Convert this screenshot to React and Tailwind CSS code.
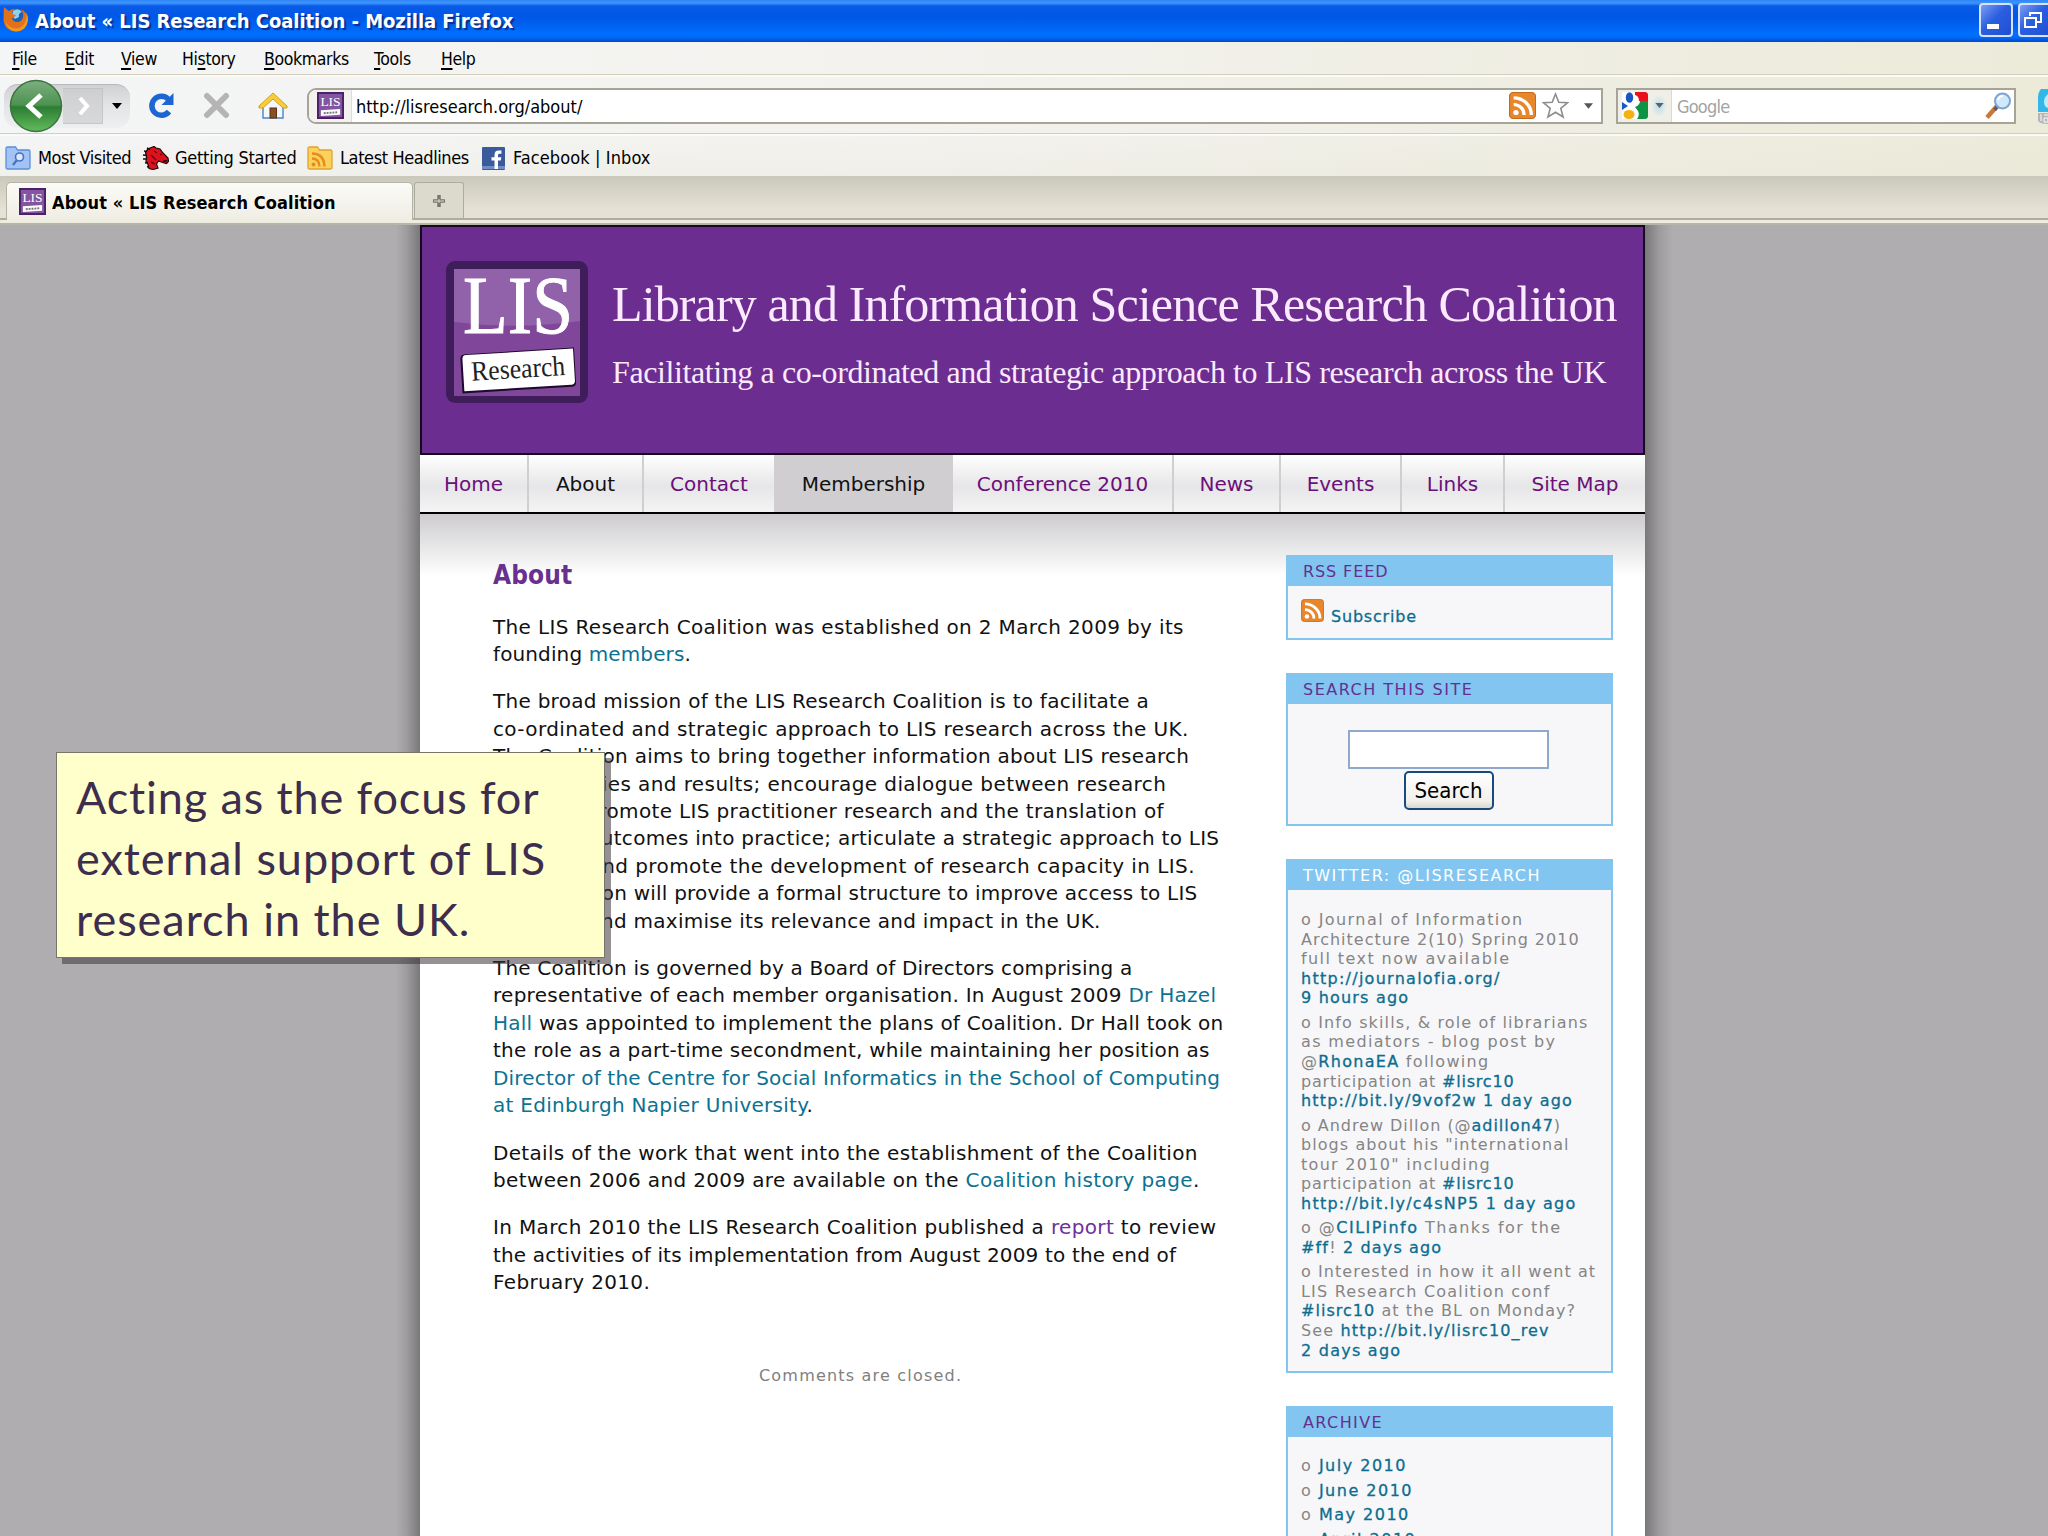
import React from 'react';

const menuItems = [
    { key: 'F', before: '', after: 'ile', width: 'w-[53px]' },
    { key: 'E', before: '', after: 'dit', width: 'w-[56px]' },
    { key: 'V', before: '', after: 'iew', width: 'w-[61px]' },
    { key: 's', before: 'Hi', after: 'tory', width: 'w-[82px]' },
    { key: 'B', before: '', after: 'ookmarks', width: 'w-[110px]' },
    { key: 'T', before: '', after: 'ools', width: 'w-[67px]' },
    { key: 'H', before: '', after: 'elp', width: 'w-[60px]' },
];

const navItems = [
    { label: 'Home', width: 'w-[109px]' },
    { label: 'About', width: 'w-[115px]', current: true },
    { label: 'Contact', width: 'w-[132px]' },
    { label: 'Membership', width: 'w-[177px]', hover: true },
    { label: 'Conference 2010', width: 'w-[221px]' },
    { label: 'News', width: 'w-[107px]' },
    { label: 'Events', width: 'w-[121px]' },
    { label: 'Links', width: 'w-[103px]' },
    { label: 'Site Map', width: 'w-[140px]' },
];

const months = ['July 2010', 'June 2010', 'May 2010', 'April 2010'];

const LisLogo = ({ className }) => (
    <svg viewBox="0 0 142 142" className={className}>
        <rect x="0" y="0" width="142" height="142" rx="9" fill="#3f1d5b" />
        <rect x="8" y="8" width="126" height="127" fill="#7f4699" />
        <path d="M8 8h126v52q-62 9-126 1z" fill="#9161a9" />
        <text x="17" y="72" fontSize="82" fill="#fff" stroke="#fff" strokeWidth="1" textLength="110" lengthAdjust="spacingAndGlyphs" className="font-['Liberation_Serif',serif]">LIS</text>
        <g transform="rotate(-3.5 71 106)">
            <path d="M20 90h109v35q0 4-4 4h-110v-34q0-5 5-5z" fill="#1d0a2c" />
            <path d="M21 91h107v32q0 4-4 4h-107v-32q0-4 4-4z" fill="#fff" />
            <text x="25" y="117" fontSize="28" fill="#222" textLength="94" lengthAdjust="spacingAndGlyphs" className="font-['Liberation_Serif',serif]">Research</text>
        </g>
    </svg>
);

const Favicon = ({ className }) => (
    <svg viewBox="0 0 28 28" preserveAspectRatio="none" className={className}>
        <rect width="28" height="28" fill="#4a2169" />
        <rect x="2" y="2" width="24" height="24" fill="#8454a0" />
        <text x="3.5" y="14.5" fontSize="14" fill="#fff" textLength="21" lengthAdjust="spacingAndGlyphs" className="font-['Liberation_Serif',serif]">LIS</text>
        <path d="M4 19l20-1.500v6l-20 1.500z" fill="#fff" />
        <path d="M7 22l14-1" stroke="#777" strokeWidth="2" strokeDasharray="2 1" />
    </svg>
);

const RssIcon = ({ className }) => (
    <svg viewBox="0 0 26 27" preserveAspectRatio="none" className={className}>
        <rect x="0.500" y="0.500" width="25" height="26" rx="3.500" fill="#e8862c" stroke="#c8691a" />
        <circle cx="6.700" cy="20.500" r="2.600" fill="#fff" />
        <path d="M4.500 12.500a10 10 0 0 1 10 10.500M4.500 5.800a17 17 0 0 1 17 17.200" fill="none" stroke="#fff" strokeWidth="3.200" />
    </svg>
);

const FirefoxIcon = () => (
    <svg viewBox="0 0 26 27" className="w-[26px] h-[27px]">
        <circle cx="13" cy="13.500" r="10.500" fill="#1c5fb4" />
        <path d="M10 6q5-4 9 1q-4 1-3 5l-4 2-3-3z" fill="#8fd0ee" />
        <path d="M1 2q3 3 5 4q2-2 6-2q-4 3-3 5l4 1q-1 2-4 3q1 4 5 4q5 0 6-5q1-4-2-8q7 4 7 11q-1 11-12 11.500q-12-1-12.500-12q0-7 .500-12.500z" fill="#e2711a" />
        <path d="M2 15q3 8 11 8.500q8-1 9.500-8q2-5 0-9q3 4 2.500 9q-2 10.500-12 11q-9-.500-11-11.500z" fill="#f5a822" opacity="0.7" />
    </svg>
);

const ReloadIcon = () => (
    <svg viewBox="0 0 27 27" className="w-[27px] h-[27px]">
        <path d="M21 19.500a9.500 9.500 0 1 1-.500-12" fill="none" stroke="#1d66d2" strokeWidth="5.500" />
        <path d="M25.500 1v12h-12z" fill="#1d66d2" />
    </svg>
);

const HomeIcon = () => (
    <svg viewBox="0 0 30 27" className="w-[30px] h-[27px]">
        <path d="M5 13v13h20V13L15 5z" fill="#f3f8ff" stroke="#4c83c4" strokeWidth="1.400" />
        <rect x="12" y="16" width="6.500" height="10" fill="#8a4e24" stroke="#5d3113" />
        <path d="M15 1L1 14v2h4l10-9 10 9h4v-2z" fill="#f7cd3e" stroke="#d4a017" />
    </svg>
);

const FolderIcon = ({ tone, children }) => (
    <svg viewBox="0 0 26 24" className="w-[26px] h-6">
        <path d="M1 2.500q0-1.500 1.500-1.500h8l2 3h11q1.500 0 1.500 1.500v16q0 1.500-1.500 1.500h-21q-1.500 0-1.500-1.500z"
            fill={tone === 'blue' ? '#a3c3f5' : '#fbd25c'} stroke={tone === 'blue' ? '#5c8ddd' : '#e0a32c'} strokeWidth="1.300" />
        {children}
    </svg>
);

const HorseIcon = () => (
    <svg viewBox="0 0 27 24" className="w-[27px] h-6">
        <path d="M8 2l4-1.500 2 1.500 4 1 3 4 5 5 .500 3.500-2 2-4-1-4-1.500-2 3 1.500 4-5 1.500-4-1-1-4-2-3 .500-5-1-4 2-3z" fill="#dc121c" stroke="#2a0506" strokeWidth="1.200" />
        <path d="M2 5l3 .500M1 9l4 .500M1 13h4M3 17l3-.500M5 21l2-.500M5 2l3 1.500" stroke="#111" strokeWidth="1.600" />
        <path d="M12 5l3 2M9 9l5 5M9 16l4 2M18 8.500h2" stroke="#6d060b" strokeWidth="1.400" />
        <path d="M21 15.500l4-1" stroke="#111" strokeWidth="1.800" />
    </svg>
);

const FacebookIcon = () => (
    <svg viewBox="0 0 23 23" className="w-[23px] h-[23px]">
        <rect width="23" height="23" rx="1" fill="#3b5a9c" />
        <rect y="19" width="23" height="3" fill="#6f8cc4" />
        <path d="M12.500 22v-8.500h-3v-3.300h3v-2.400q0-4.300 4.300-4.300h2.600v3.300h-2q-1.400 0-1.400 1.400v2h3.300l-.500 3.300h-2.800v8.500z" fill="#fff" />
    </svg>
);

const GoogleIcon = () => (
    <svg viewBox="0 0 26 27" className="w-[26px] h-[27px]">
        <rect width="26" height="27" fill="#fff" />
        <path d="M13 0h10q3 0 3 3v6H17q0-5-4-6z" fill="#e8111b" />
        <path d="M26 9v15q0 3-3 3h-8q3-4 1-8l-3-4q5-2 5-6z" fill="#0c9344" />
        <ellipse cx="7.500" cy="5.500" rx="3.700" ry="5.300" fill="#1a56c4" />
        <path d="M0 10l6 4-6 4z" fill="#1a56c4" />
        <ellipse cx="7" cy="22.500" rx="5.500" ry="4.500" fill="#f2b211" />
    </svg>
);

const SearchGlass = () => (
    <svg viewBox="0 0 27 27" className="w-[27px] h-[27px]">
        <path d="M12 14L2 25.500" stroke="#c9783a" strokeWidth="4.500" />
        <path d="M13 14L9.500 18" stroke="#5a5f77" strokeWidth="3.500" />
        <circle cx="17.500" cy="9" r="7.500" fill="#cfe8fc" stroke="#7fa3d3" strokeWidth="2" />
        <path d="M13 8q1-4 5-4" stroke="#fff" strokeWidth="2" fill="none" />
    </svg>
);

const Caret = ({ className }) => (
    <svg viewBox="0 0 10 6" className={className}><path d="M0 0h10L5 6z" fill="currentColor" /></svg>
);

const BrowserChrome = () => (
    <header className="shrink-0 text-black font-['DejaVu_Sans_Condensed','DejaVu_Sans',sans-serif]">
        {/* Title bar */}
        <div className="h-[42px] flex items-center pl-[3px] overflow-hidden bg-[linear-gradient(to_bottom,#2f86f5_0,#3d95ff_3px,#0a5be6_6px,#0057e6_16px,#0062f2_26px,#0070ff_34px,#006cfa_37px,#0048cf_42px)]">
            <div className="-mt-[6px]"><FirefoxIcon /></div>
            <div className="flex-1 ml-[6px] text-[20px] leading-[42px] font-bold text-white whitespace-nowrap tracking-[-0.05px] [text-shadow:2px_2px_1px_#0a2f8c]">
                About « LIS Research Coalition - Mozilla Firefox
            </div>
            <div className="flex gap-[5px] -mr-[4px] shrink-0 -mt-[2px]">
                <div className="w-[34px] h-[34px] rounded-[4px] border-2 border-[#d6e2ff] bg-[linear-gradient(135deg,#7d9df2,#2b5fe0_45%,#1f4fd0)] flex items-end pl-[6px] pb-[6px]">
                    <div className="w-3 h-[5px] bg-white" />
                </div>
                <div className="w-[34px] h-[34px] rounded-[4px] border-2 border-[#d6e2ff] bg-[linear-gradient(135deg,#7d9df2,#2b5fe0_45%,#1f4fd0)] flex items-center justify-center">
                    <svg viewBox="0 0 18 18" className="w-[18px] h-[18px] -ml-[4px]">
                        <path d="M6 5V2h11v9h-4" fill="none" stroke="#fff" strokeWidth="2" />
                        <rect x="1" y="7" width="11" height="9" fill="none" stroke="#fff" strokeWidth="2" />
                    </svg>
                </div>
            </div>
        </div>

        <div className="bg-[linear-gradient(to_right,#f4f5f6,#f3f2ee_45%,#ecead9)]">
            {/* Menu */}
            <div className="h-[35px] pl-3 flex border-b-2 border-[#fbfaf4] shadow-[inset_0_-1px_0_#d2cfbc] text-[17.5px] leading-[34px] tracking-[-0.35px]">
                {menuItems.map((item) => (
                    <div key={item.key} className={item.width}>
                        {item.before}<span className="underline underline-offset-[3px] decoration-[1.5px]">{item.key}</span>{item.after}
                    </div>
                ))}
            </div>

            {/* Navigation toolbar */}
            <div className="h-[59px] flex items-center border-b-2 border-[#fbfaf4] shadow-[inset_0_-1px_0_#d2cfbc]">
                <div className="ml-1 w-[126px] h-[44px] rounded-[14px] border-t border-[#b9b9bb] bg-[linear-gradient(to_bottom,#d0d1d3,#e4e5e7_50%,#eeeff0)] flex items-center">
                    <svg viewBox="0 0 54 54" className="w-[54px] h-[54px] ml-[5px] shrink-0">
                        <defs>
                            <linearGradient id="back" x1="0" y1="0" x2="0" y2="1">
                                <stop offset="0" stopColor="#7dae7f" />
                                <stop offset="0.48" stopColor="#4b9350" />
                                <stop offset="0.52" stopColor="#2c7d31" />
                                <stop offset="1" stopColor="#63bb5d" />
                            </linearGradient>
                        </defs>
                        <circle cx="27" cy="27" r="25.500" fill="url(#back)" stroke="#3d7440" strokeWidth="1.500" />
                        <path d="M32 16L20 27l12 11" fill="none" stroke="#fff" strokeWidth="5" />
                    </svg>
                    <div className="w-[40px] h-[36px] bg-[#c9cacc]/60 border border-[#bcbdbf]/60 border-l-0 flex items-center justify-center">
                        <svg viewBox="0 0 12 18" className="w-3 h-[18px] ml-[3px]"><path d="M2 1l7 8-7 8" fill="none" stroke="#fff" strokeWidth="4" /></svg>
                    </div>
                    <Caret className="w-[10px] h-[6px] ml-[9px]" />
                </div>
                <div className="ml-[18px]"><ReloadIcon /></div>
                <svg viewBox="0 0 27 27" className="w-[27px] h-[27px] ml-[28px]">
                    <path d="M4 4l19 19M23 4L4 23" stroke="#b4b4b4" strokeWidth="6" strokeLinecap="round" />
                </svg>
                <div className="ml-[28px]"><HomeIcon /></div>

                <div className="ml-[19px] w-[1296px] h-9 border-2 border-[#a5a497] rounded-l-[9px] bg-white flex items-center overflow-hidden">
                    <div className="w-[43px] h-full bg-[#f3f2ee] border-r border-[#dddcd5] flex items-center pl-2">
                        <Favicon className="w-[27px] h-[27px]" />
                    </div>
                    <span className="flex-1 pl-[4px] pt-[2px] text-[18px] tracking-[0px]">http://lisresearch.org/about/</span>
                    <RssIcon className="w-[27px] h-[27px]" />
                    <svg viewBox="0 0 27 27" className="w-[27px] h-[27px] ml-[6px]">
                        <path d="M13.500 2l3.300 8.200 8.700.600-6.700 5.600 2.300 8.600-7.600-4.800-7.600 4.800 2.300-8.600-6.700-5.600 8.700-.600z" fill="#fff" stroke="#8d8d8d" strokeWidth="1.600" />
                    </svg>
                    <Caret className="w-[9px] h-[6px] ml-[15px] mr-[8px] text-[#555]" />
                </div>

                <div className="ml-[13px] w-[400px] h-9 border-2 border-[#a5a497] bg-white flex items-center">
                    <div className="w-[54px] h-full bg-[#efefe8] border-r border-[#dcdad0] flex items-center pl-1 gap-[3px]">
                        <GoogleIcon />
                        <div className="w-[16px] h-[22px] rounded-full bg-[radial-gradient(#bcdcea,transparent_70%)] flex items-center justify-center">
                            <Caret className="w-[9px] h-[5px] text-[#55636b]" />
                        </div>
                    </div>
                    <span className="flex-1 pl-[5px] pt-[2px] text-[18px] tracking-[-0.8px] text-[#a3a3a3]">Google</span>
                    <div className="mr-[2px]"><SearchGlass /></div>
                </div>
                <svg viewBox="0 0 12 40" className="w-3 h-10 ml-[20px] shrink-0">
                    <path d="M12 3H5q-3 3-3 9v14h10z" fill="#31b8e8" />
                    <path d="M12 8q-4 3-4 8t4 6z" fill="#bfeafa" />
                    <path d="M12 27H2v8q2 3 10 3z" fill="#b5b5ba" />
                    <path d="M5 28v7M8 29h4M8 32h4v4H8z" stroke="#fff" fill="none" />
                </svg>
            </div>

            {/* Bookmarks */}
            <div className="h-10 flex items-center pl-[5px] pt-1 text-[18px] leading-[36px] whitespace-nowrap bg-[linear-gradient(to_bottom,transparent,#e6e4d540)]">
                <FolderIcon tone="blue">
                    <circle cx="14.500" cy="11" r="4" fill="#dbe8fd" stroke="#4672c4" strokeWidth="1.600" />
                    <path d="M11.500 14.500L8 19" stroke="#4672c4" strokeWidth="2.200" />
                </FolderIcon>
                <span className="ml-[7px] w-[104px] tracking-[-0.45px]">Most Visited</span>
                <HorseIcon />
                <span className="ml-[6px] w-[132px] tracking-[-0.25px]">Getting Started</span>
                <FolderIcon tone="yellow">
                    <circle cx="6.500" cy="18.500" r="2" fill="#e98a1d" />
                    <path d="M5 12.500q7 0 7.500 8M5 7.500q12 0 12.500 13" fill="none" stroke="#e98a1d" strokeWidth="2.400" />
                </FolderIcon>
                <span className="ml-[7px] w-[142px] tracking-[-0.4px]">Latest Headlines</span>
                <FacebookIcon />
                <span className="ml-2 tracking-[0.1px]">Facebook | Inbox</span>
            </div>
        </div>

        {/* Tabs */}
        <div className="h-[44px] flex items-end pl-[6px] bg-[linear-gradient(to_bottom,#c9c8bb,#d6d4c6_35%,#e5e2d5_80%)] border-b-2 border-[#aeac9e]">
            <div className="w-[407px] h-[38px] -mb-[2px] rounded-t-[5px] border border-b-0 border-[#b5b3a5] bg-[linear-gradient(to_bottom,#fbfbf7,#efede3)] flex items-center pl-[12px]">
                <Favicon className="w-[27px] h-[27px]" />
                <span className="ml-[6px] pt-px text-[18px] font-bold tracking-[0.1px] whitespace-nowrap">About « LIS Research Coalition</span>
            </div>
            <div className="w-[50px] h-[36px] ml-px rounded-t-[3px] border border-b-0 border-[#aeac9e] bg-[#dcdacd] flex items-center justify-center">
                <svg viewBox="0 0 14 14" className="w-[14px] h-[14px]">
                    <path d="M7 1v12M1 7h12" stroke="#77776f" strokeWidth="3.500" />
                    <path d="M7 5v4M2 7h10" stroke="#dddbd0" strokeWidth="1" />
                </svg>
            </div>
        </div>
        <div className="h-[5px] bg-[#eeebdf] border-b-2 border-[#b7b4aa]" />
    </header>
);

const A = ({ children }) => <a className="text-[#0b7291]">{children}</a>;
const T = ({ children }) => <a className="text-[#0b6d90] [-webkit-text-stroke:0.3px_#0b6d90]">{children}</a>;

const Line = ({ className = 'tracking-[0.35px]', children }) => (
    <span className={`block whitespace-nowrap ${className}`}>{children}</span>
);

const Box = ({ title, titleClass = 'text-[#64308f]', className, children }) => (
    <section className={`border-2 border-[#82c5ef] bg-[#f7f7f9] ${className}`}>
        <h3 className={`h-[29px] leading-[29px] pl-[15px] text-[16px] bg-[#82c5f0] whitespace-nowrap ${titleClass}`}>{title}</h3>
        {children}
    </section>
);

const Sidebar = () => (
    <aside className="w-[327px] pt-[41px] text-[16px] shrink-0">
        <Box title="RSS FEED" titleClass="text-[#64308f] tracking-[0.9px]" className="h-[85px]">
            <div className="flex pl-[13px] pt-[13px]">
                <RssIcon className="w-[23px] h-[23px]" />
                <span className="ml-[7px] mt-[6px] leading-6 tracking-[0.8px]"><T>Subscribe</T></span>
            </div>
        </Box>

        <Box title="SEARCH THIS SITE" titleClass="text-[#64308f] tracking-[1.5px]" className="h-[153px] mt-[33px]">
            <div className="flex flex-col items-center pt-[26px] pr-[2px]">
                <div className="w-[201px] h-[39px] bg-white border-2 border-[#8fa9cd]" />
                <div className="mt-[2px] w-[90px] h-[39px] rounded-[5px] border-2 border-[#164a80] bg-[linear-gradient(to_bottom,#fff,#f1f0ea_80%,#dbd7cc)] text-black text-[22px] leading-[36px] text-center font-['DejaVu_Sans_Condensed',sans-serif]">Search</div>
            </div>
        </Box>

        <Box title="TWITTER: @LISRESEARCH" titleClass="text-white tracking-[1.5px]" className="h-[514px] mt-[33px]">
            <ul className="pl-[13px] pt-[20px] leading-[19.6px] text-[#858585] space-y-[4.8px]">
                <li>
                    <Line className="tracking-[1.42px]">o Journal of Information</Line>
                    <Line className="tracking-[1px]">Architecture 2(10) Spring 2010</Line>
                    <Line className="tracking-[1.42px]">full text now available</Line>
                    <Line className="tracking-[1.27px]"><T>http://journalofia.org/</T></Line>
                    <Line className="tracking-[1.2px]"><T>9 hours ago</T></Line>
                </li>
                <li>
                    <Line className="tracking-[1.13px]">o Info skills, &amp; role of librarians</Line>
                    <Line className="tracking-[1.35px]">as mediators - blog post by</Line>
                    <Line className="tracking-[1.3px]">@<T>RhonaEA</T> following</Line>
                    <Line className="tracking-[0.8px]">participation at <T>#lisrc10</T></Line>
                    <Line className="tracking-[1.16px]"><T>http://bit.ly/9vof2w</T> <T>1 day ago</T></Line>
                </li>
                <li>
                    <Line className="tracking-[0.96px]">o Andrew Dillon (@<T>adillon47</T>)</Line>
                    <Line className="tracking-[1.07px]">blogs about his "international</Line>
                    <Line className="tracking-[1.3px]">tour 2010" including</Line>
                    <Line className="tracking-[0.8px]">participation at <T>#lisrc10</T></Line>
                    <Line className="tracking-[1.25px]"><T>http://bit.ly/c4sNP5</T> <T>1 day ago</T></Line>
                </li>
                <li>
                    <Line className="tracking-[1.48px]">o @<T>CILIPinfo</T> Thanks for the</Line>
                    <Line className="tracking-[1.15px]"><T>#ff</T>! <T>2 days ago</T></Line>
                </li>
                <li>
                    <Line className="tracking-[1.05px]">o Interested in how it all went at</Line>
                    <Line className="tracking-[1.2px]">LIS Research Coalition conf</Line>
                    <Line className="tracking-[1.03px]"><T>#lisrc10</T> at the BL on Monday?</Line>
                    <Line className="tracking-[1.15px]">See <T>http://bit.ly/lisrc10_rev</T></Line>
                    <Line className="tracking-[1.25px]"><T>2 days ago</T></Line>
                </li>
            </ul>
        </Box>

        <Box title="ARCHIVE" titleClass="text-[#64308f] tracking-[1.4px]" className="h-[300px] mt-[33px]">
            <ul className="pl-[13px] pt-[17px] leading-[24.7px] text-[#858585] tracking-[1.5px]">
                {months.map((m) => <li key={m}>o <T>{m}</T></li>)}
            </ul>
        </Box>
    </aside>
);

const Article = () => (
    <article className="w-[866px] pl-[73px] pt-[41px] text-[20px] leading-[27.4px] text-[#111] shrink-0">
        <h2 className="text-[26px] leading-10 font-bold text-[#68308f] tracking-[0.1px] font-['DejaVu_Sans_Condensed',sans-serif]">About</h2>
        <div className="mt-[18.6px] space-y-5">
            <p>
                <Line>The LIS Research Coalition was established on 2 March 2009 by its</Line>
                <Line className="tracking-[0.12px]">founding <A>members</A>.</Line>
            </p>
            <p>
                <Line className="tracking-[0.27px]">The broad mission of the LIS Research Coalition is to facilitate a</Line>
                <Line className="tracking-[0.37px]">co-ordinated and strategic approach to LIS research across the UK.</Line>
                <Line className="tracking-[0.28px]">The Coalition aims to bring together information about LIS research</Line>
                <Line className="tracking-[0.41px]">opportunities and results; encourage dialogue between research</Line>
                <Line>funders; promote LIS practitioner research and the translation of</Line>
                <Line className="tracking-[0.27px]">research outcomes into practice; articulate a strategic approach to LIS</Line>
                <Line className="tracking-[0.41px]">research and promote the development of research capacity in LIS.</Line>
                <Line className="tracking-[0.21px]">The Coalition will provide a formal structure to improve access to LIS</Line>
                <Line className="tracking-[0.28px]">research and maximise its relevance and impact in the UK.</Line>
            </p>
            <p>
                <Line className="tracking-[0.19px]">The Coalition is governed by a Board of Directors comprising a</Line>
                <Line className="tracking-[0.28px]">representative of each member organisation. In August 2009 <A>Dr Hazel</A></Line>
                <Line className="tracking-[0.24px]"><A>Hall</A> was appointed to implement the plans of Coalition. Dr Hall took on</Line>
                <Line className="tracking-[0.25px]">the role as a part-time secondment, while maintaining her position as</Line>
                <Line className="tracking-[0.17px]"><A>Director of the Centre for Social Informatics in the School of Computing</A></Line>
                <Line className="tracking-[0.27px]"><A>at Edinburgh Napier University</A>.</Line>
            </p>
            <p>
                <Line className="tracking-[0.32px]">Details of the work that went into the establishment of the Coalition</Line>
                <Line className="tracking-[0.36px]">between 2006 and 2009 are available on the <A>Coalition history page</A>.</Line>
            </p>
            <p>
                <Line>In March 2010 the LIS Research Coalition published a <a className="text-[#6f2f9c]">report</a> to review</Line>
                <Line className="tracking-[0.17px]">the activities of its implementation from August 2009 to the end of</Line>
                <Line>February 2010.</Line>
            </p>
        </div>
        <p className="mt-[67px] pl-[266px] text-[16px] leading-6 text-[#808080] tracking-[1.2px]">Comments are closed.</p>
    </article>
);

const App = () => (
    <div className="relative w-[2048px] h-[1536px] overflow-hidden bg-[#afadb0] flex flex-col">
        <BrowserChrome />

        <div className="flex-1 min-h-0 flex font-['DejaVu_Sans',sans-serif]">
            <div className="w-[396px]" />
            <div className="w-6 bg-[linear-gradient(to_right,#afadb0,#9d9b9e_45%,#79777a)]" />
            <main className="w-[1225px] bg-white">
                <div className="h-[230px] border-2 border-[#160a1e] bg-[#6c2d91] flex">
                    <LisLogo className="w-[142px] h-[142px] ml-[24px] mt-[34px] shrink-0" />
                    <div className="ml-[24px] text-[#fbe9fd] whitespace-nowrap font-['Liberation_Serif',serif]">
                        <h1 className="mt-[47px] text-[50px] leading-[60px] tracking-[-0.87px]">Library and Information Science Research Coalition</h1>
                        <p className="mt-[18px] text-[32px] leading-[40px] tracking-[-0.4px]">Facilitating a co-ordinated and strategic approach to LIS research across the UK</p>
                    </div>
                </div>

                <nav className="h-[59px] flex border-b-2 border-black bg-[linear-gradient(to_bottom,#fff,#e6e5e7_55%,#f4f4f5)] text-[20px] leading-[58px]">
                    {navItems.map((item) => (
                        <a
                            key={item.label}
                            className={`${item.width} text-center whitespace-nowrap border-r-2 last:border-r-0 ${item.hover ? 'bg-[#d0ced1] border-[#d0ced1] text-[#111]' : 'border-[#cfcfd1]'} ${item.current ? 'text-[#111]' : ''} ${!item.hover && !item.current ? 'text-[#6b0f7a]' : ''}`}
                        >
                            {item.label}
                        </a>
                    ))}
                </nav>

                <div className="h-[1022px] flex bg-[linear-gradient(to_bottom,#cdcbce,#fff_62px)]">
                    <Article />
                    <Sidebar />
                </div>
            </main>
            <div className="w-7 bg-[linear-gradient(to_left,#afadb0,#9d9b9e_50%,#79777a)]" />
        </div>

        {/* Sticky note over the page */}
        <div className="absolute left-[56px] top-[752px] w-[549px] h-[206px] bg-[#ffffcc] border border-[#77756a] shadow-[6px_6px_0_rgba(60,52,60,0.55)] pl-[19px] pt-[14px] text-[45px] leading-[61.2px] text-[#3d2d4e] whitespace-nowrap font-['Lato',sans-serif]">
            <Line className="tracking-[0.88px]">Acting as the focus for</Line>
            <Line className="tracking-[0.97px]">external support of LIS</Line>
            <Line className="tracking-[0.97px]">research in the UK.</Line>
        </div>
    </div>
);

export default App;
